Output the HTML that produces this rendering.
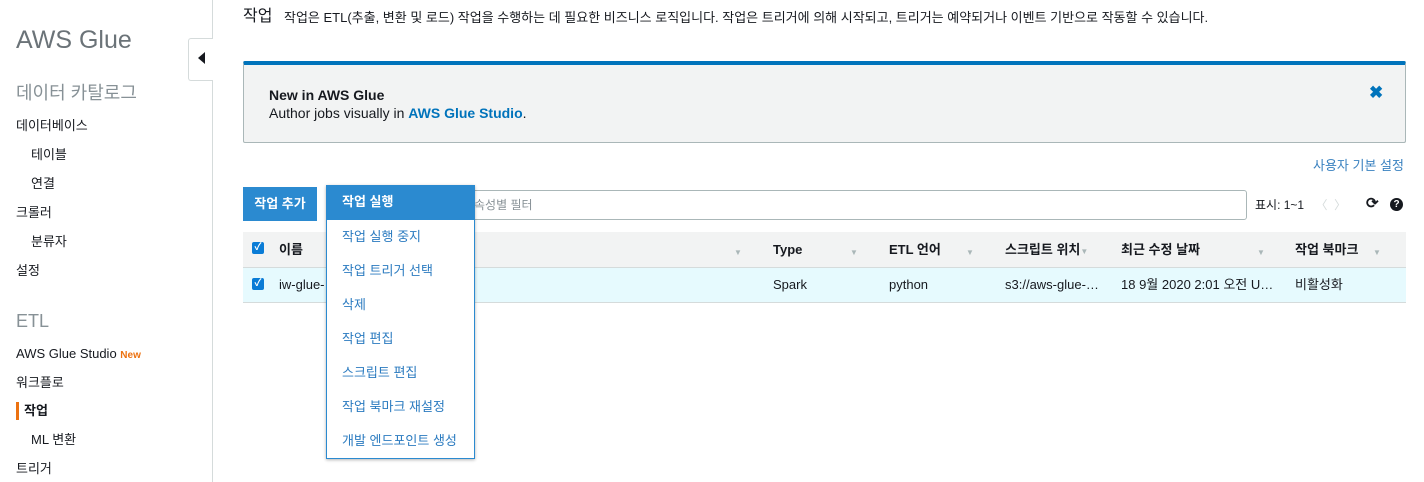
<!DOCTYPE html><html><head><meta charset="utf-8"><style>
body{margin:0;width:1424px;height:482px;overflow:hidden;background:#fff;font-family:"Liberation Sans","Noto Sans CJK KR",sans-serif;color:#16191f;font-size:13px;position:relative}
.a{position:absolute;white-space:nowrap;line-height:16px}
.side{position:absolute;left:0;top:0;width:212px;height:482px;border-right:1px solid #d5dbdb}
.g{color:#687078}
.lnk{color:#0073bb}
.cb{position:absolute;width:12px;height:12px;background:#0a7cd6;border-radius:2px;color:#fff;font-size:10px;line-height:12px;text-align:center;font-weight:bold}
.th{font-weight:bold}
.car{color:#aab7b8;font-size:8px}
.dd{position:absolute;left:326px;top:185px;width:147px;height:272px;background:#fff;border:1px solid #2b8ad0;box-shadow:0 1px 3px rgba(0,0,0,.3)}
.dd div{position:absolute;left:15px;color:#2b7bc0;font-size:13px;line-height:16px}
</style></head><body>
<div class="side">
<div class="a g" style="left:16px;top:26px;font-size:25px;line-height:28px;color:#6b7378">AWS Glue</div>
<div class="a g" style="left:16px;top:83px;font-size:18px;line-height:20px;color:#879196">데이터 카탈로그</div>
<div class="a" style="left:16px;top:118px">데이터베이스</div>
<div class="a" style="left:31px;top:147px">테이블</div>
<div class="a" style="left:31px;top:176px">연결</div>
<div class="a" style="left:16px;top:205px">크롤러</div>
<div class="a" style="left:31px;top:234px">분류자</div>
<div class="a" style="left:16px;top:263px">설정</div>
<div class="a" style="left:16px;top:311px;font-size:18px;line-height:20px;color:#879196">ETL</div>
<div class="a" style="left:16px;top:346px">AWS Glue Studio <span style="color:#ec7211;font-size:10px;font-weight:bold">New</span></div>
<div class="a" style="left:16px;top:375px">워크플로</div>
<div class="a" style="left:16px;top:402px;width:3px;height:18px;background:#ec7211"></div>
<div class="a" style="left:24px;top:403px;font-weight:bold">작업</div>
<div class="a" style="left:31px;top:432px">ML 변환</div>
<div class="a" style="left:16px;top:461px">트리거</div>
</div>
<div class="a" style="left:188px;top:38px;width:24px;height:41px;background:#fff;border:1px solid #d5dbdb;border-right:none;border-radius:3px 0 0 3px"></div>
<div class="a" style="left:198px;top:52px;width:0;height:0;border-top:6px solid transparent;border-bottom:6px solid transparent;border-right:7px solid #16191f"></div>
<div class="a" style="left:243px;top:8px;font-size:16px;line-height:18px">작업</div>
<div class="a" style="left:284px;top:10px;font-size:13px">작업은 ETL(추출, 변환 및 로드) 작업을 수행하는 데 필요한 비즈니스 로직입니다. 작업은 트리거에 의해 시작되고, 트리거는 예약되거나 이벤트 기반으로 작동할 수 있습니다.</div>
<div class="a" style="left:243px;top:61px;width:1163px;height:82px;background:#f2f3f3;border:1px solid #aab7b8;border-top:4px solid #0073bb;border-radius:2px;box-sizing:border-box"></div>
<div class="a" style="left:269px;top:87px;font-weight:bold;font-size:14px">New in AWS Glue</div>
<div class="a" style="left:269px;top:105px;font-size:14px">Author jobs visually in <b class="lnk">AWS Glue Studio</b>.</div>
<div class="a lnk" style="left:1369px;top:85px;font-size:17px;font-weight:bold">✖</div>
<div class="a lnk" style="left:1313px;top:158px;color:#3a82c0">사용자 기본 설정</div>
<div class="a" style="left:243px;top:187px;width:74px;height:34px;background:#2b8ad0;color:#fff;line-height:34px;text-align:center;font-weight:bold">작업 추가</div>
<div class="a" style="left:326px;top:190px;width:919px;height:28px;border:1px solid #aab7b8;border-radius:3px"></div>
<div class="a" style="left:474px;top:197px;color:#879196;font-size:12px">속성별 필터</div>
<div class="a" style="left:1255px;top:197px;font-size:12px">표시: 1~1 <span style="color:#d5dbdb;margin-left:8px">〈 &nbsp;〉</span></div>
<div class="a" style="left:1366px;top:196px;font-size:15px;font-weight:bold">⟳</div>
<div class="a" style="left:1390px;top:198px;width:13px;height:13px;border-radius:50%;background:#16191f;color:#fff;font-size:10px;text-align:center;line-height:13px;font-weight:bold">?</div>
<div class="a" style="left:243px;top:232px;width:1163px;height:35px;background:#f2f3f3;border-bottom:1px solid #d5dbdb"></div>
<div class="a" style="left:243px;top:268px;width:1163px;height:34px;background:#e6fafe;border-bottom:1px solid #d5dbdb"></div>
<div class="cb" style="left:252px;top:242px">✓</div>
<div class="a th" style="left:279px;top:242px">이름</div>
<div class="a car" style="left:734px;top:245px">▼</div>
<div class="a th" style="left:773px;top:242px">Type</div><div class="a car" style="left:850px;top:245px">▼</div>
<div class="a th" style="left:889px;top:242px">ETL 언어</div><div class="a car" style="left:966px;top:245px">▼</div>
<div class="a th" style="left:1005px;top:242px">스크립트 위치<span class="car">▼</span></div>
<div class="a th" style="left:1121px;top:242px">최근 수정 날짜</div><div class="a car" style="left:1257px;top:245px">▼</div>
<div class="a th" style="left:1295px;top:242px">작업 북마크</div><div class="a car" style="left:1373px;top:245px">▼</div>
<div class="cb" style="left:252px;top:278px">✓</div>
<div class="a" style="left:279px;top:277px">iw-glue-</div>
<div class="a" style="left:773px;top:277px">Spark</div>
<div class="a" style="left:889px;top:277px">python</div>
<div class="a" style="left:1005px;top:277px">s3://aws-glue-…</div>
<div class="a" style="left:1121px;top:277px">18 9월 2020 2:01 오전 U…</div>
<div class="a" style="left:1295px;top:277px">비활성화</div>
<div class="dd">
<div style="left:0;top:0;width:147px;height:34px;background:#2b8ad0"></div>
<div style="top:8px;color:#fff;font-weight:bold">작업 실행</div>
<div style="top:43px">작업 실행 중지</div>
<div style="top:77px">작업 트리거 선택</div>
<div style="top:111px">삭제</div>
<div style="top:145px">작업 편집</div>
<div style="top:179px">스크립트 편집</div>
<div style="top:213px">작업 북마크 재설정</div>
<div style="top:247px">개발 엔드포인트 생성</div>
</div>
</body></html>
